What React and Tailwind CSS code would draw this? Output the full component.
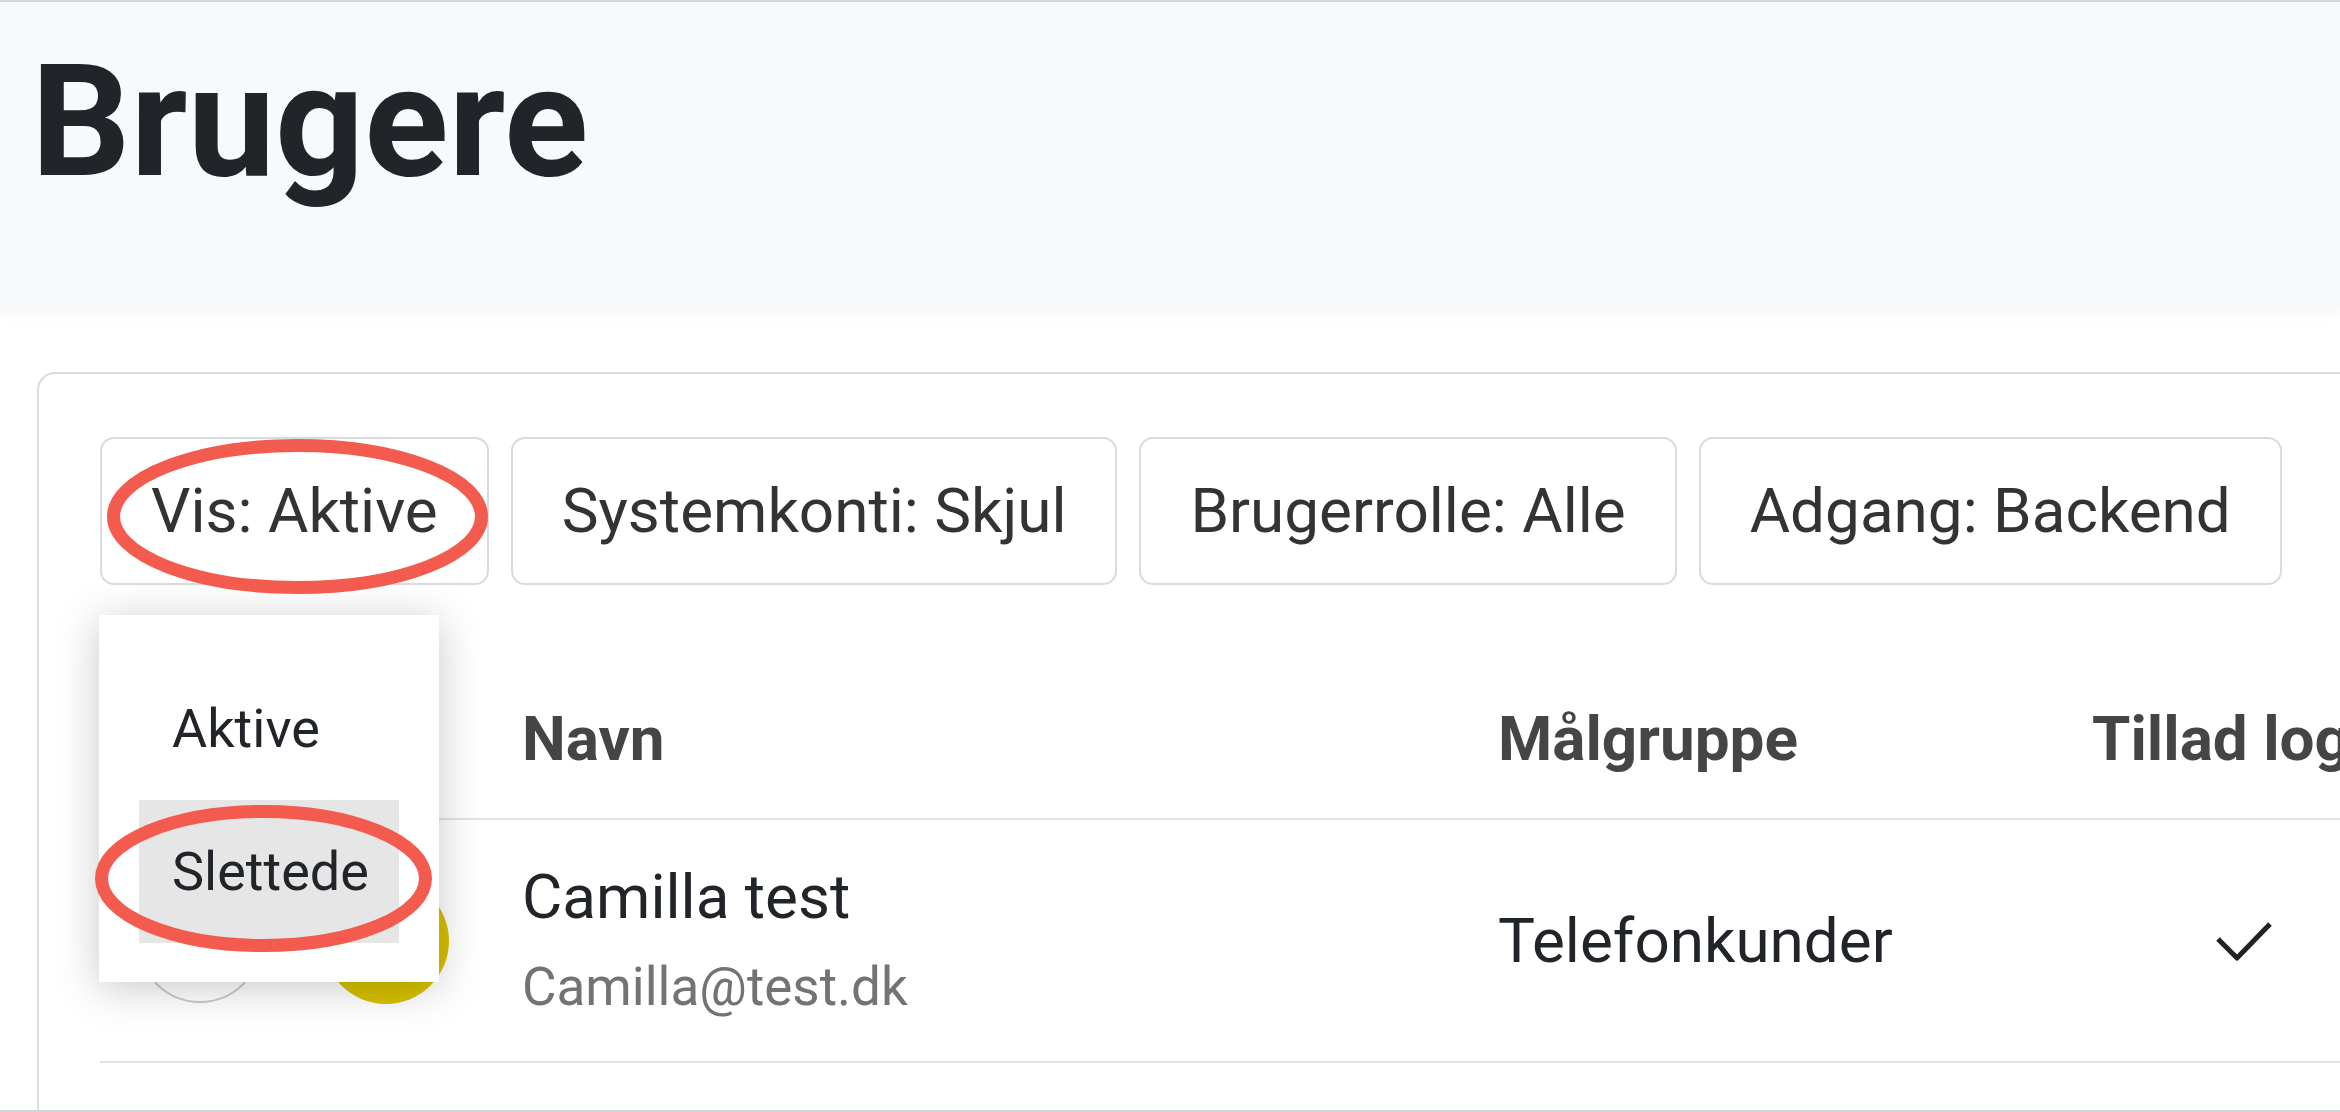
import React from "react";

const filters = ["Vis: Aktive", "Systemkonti: Skjul", "Brugerrolle: Alle", "Adgang: Backend"];

const FilterButton = ({ label, children }) => (
  <div className="relative">
    <button className="flex h-[148px] items-center whitespace-nowrap rounded-[14px] border-2 border-[#d9dcdf] bg-white px-[49px] text-[62px] leading-none text-[#333]">
      {label}
    </button>
    {children}
  </div>
);

const StatusMenu = () => (
  <div className="absolute left-[-1px] top-[178px] z-20 w-[340px] bg-white px-[40px] pb-[39px] pt-[42px] shadow-[0_6px_40px_rgba(0,0,0,0.22)]">
    <div className="flex h-[143px] items-center pl-[33px] text-[54px] text-[#212529]">Aktive</div>
    <div className="flex h-[143px] items-center bg-[#e6e6e6] pl-[33px] text-[54px] text-[#212529]">Slettede</div>
  </div>
);

const App = () => {
  return (
    <div className="relative h-[1112px] w-[2340px] overflow-hidden border-y-2 border-[#d3d6da] bg-white font-['Roboto',sans-serif]">
      {/* page header */}
      <div className="relative z-10 h-[308px] bg-[#f8f9fa] shadow-[0_5px_12px_rgba(0,0,0,0.035)]">
        <h1 className="pl-[31px] pt-[26px] text-[156px] font-bold leading-[1.2] text-[#212529]">Brugere</h1>
      </div>

      <div className="ml-[37px] mt-[62px] h-[900px] w-[2400px] rounded-[18px] border-2 border-[#dcdcdc] pl-[61px] pt-[63px]">
        <div className="flex gap-[22px]">
          {filters.map((f, i) => (
            <FilterButton key={f} label={f}>
              {i === 0 && <StatusMenu />}
            </FilterButton>
          ))}
        </div>

        {/* users table */}
        <div className="mt-[73px]">
          <div className="grid h-[162px] grid-cols-[422px_976px_594px_1fr] items-center border-b-2 border-[#e3e3e3] text-[62px] font-bold leading-[1.5] text-[#454545]">
            <div />
            <div>Navn</div>
            <div>Målgruppe</div>
            <div className="whitespace-nowrap">Tillad login</div>
          </div>

          <div className="grid h-[243px] grid-cols-[422px_976px_594px_1fr] items-center border-b-2 border-[#e3e3e3]">
            <div className="flex items-center pl-[38px]">
              <div className="h-[124px] w-[124px] rounded-full border-2 border-[#c8c8c8]" />
              <div className="ml-[61px] h-[126px] w-[126px] rounded-full bg-[#d8c100]" />
            </div>
            <div>
              <div className="text-[62px] leading-[75px] text-[#212529]">Camilla test</div>
              <div className="mt-[18px] text-[53px] leading-[70px] text-[#737373]">Camilla@test.dk</div>
            </div>
            <div className="text-[62px] leading-[75px] text-[#212529]">Telefonkunder</div>
            <div className="pl-[124px]">
              <svg width="56" height="40" viewBox="0 0 56 40" fill="none">
                <polyline points="2,18 21,37 54,3" stroke="#222" strokeWidth="5" strokeLinejoin="round" />
              </svg>
            </div>
          </div>
        </div>
      </div>

      {/* red annotation rings */}
      <svg className="pointer-events-none absolute left-0 top-0 z-30" width="2340" height="1112">
        <ellipse cx="297.5" cy="514.5" rx="184" ry="71" fill="none" stroke="#f35b4f" strokeWidth="13" />
        <ellipse cx="263.5" cy="876.5" rx="162" ry="67" fill="none" stroke="#f35b4f" strokeWidth="13" />
      </svg>
    </div>
  );
};

export default App;
